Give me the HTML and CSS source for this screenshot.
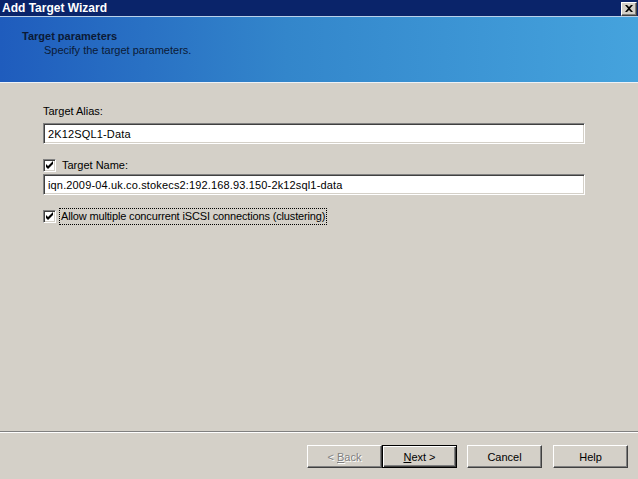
FILE: index.html
```html
<!DOCTYPE html>
<html>
<head>
    <title>Add Target Wizard</title>
    <link rel="stylesheet" href="styles.css">
</head>
<body>
    <div class="wizard">
        <div class="titlebar">
            <span class="title">Add Target Wizard</span>
            <button class="close-btn">
                <svg width="8" height="7" viewBox="0 0 8 7"><path d="M0 0h2l2 2 2-2h2L5 3.5 8 7H6L4 5 2 7H0l3-3.5z" fill="#000"/></svg>
            </button>
        </div>

        <div class="header">
            <p class="header-title">Target parameters</p>
            <p class="header-sub">Specify the target parameters.</p>
        </div>

        <div class="content">
            <label class="field-label">Target Alias:</label>
            <div class="textbox">2K12SQL1-Data</div>

            <div class="check-row">
                <span class="checkbox checked"></span>
                <span class="check-label">Target Name:</span>
            </div>
            <div class="textbox">iqn.2009-04.uk.co.stokecs2:192.168.93.150-2k12sql1-data</div>

            <div class="check-row last">
                <span class="checkbox checked"></span>
                <span class="check-label focused">Allow multiple concurrent iSCSI connections (clustering)</span>
            </div>
        </div>

        <div class="footer">
            <button class="btn" disabled>&lt; <u>B</u>ack</button>
            <button class="btn default"><u>N</u>ext &gt;</button>
            <button class="btn spaced">Cancel</button>
            <button class="btn spaced-lg">Help</button>
        </div>
    </div>
</body>
</html>
```

FILE: styles.css
```css
body, html {
    margin: 0;
    padding: 0;
    width: 638px;
    height: 479px;
    overflow: hidden;
    background: #d4d0c8;
    font-family: "Liberation Sans", Arial, sans-serif;
    font-size: 11px;
    color: #000;
}

.wizard {
    height: 479px;
    display: flex;
    flex-direction: column;
}

/* title bar */
.titlebar {
    height: 16px;
    background: #0a246a;
    display: flex;
    align-items: center;
    justify-content: space-between;
    padding: 0 1px 0 2px;
}

.title {
    color: #fff;
    font-weight: bold;
    font-size: 12px;
    font-family: "Liberation Sans", Arial, sans-serif;
}

.close-btn {
    width: 16px;
    height: 14px;
    padding: 0;
    margin-top: 1px;
    background: #d4d0c8;
    border: 1px solid;
    border-color: #fff #404040 #404040 #fff;
    box-shadow: inset -1px -1px #808080;
    display: flex;
    align-items: center;
    justify-content: center;
}

/* blue header */
.header {
    height: 67px;
    box-sizing: border-box;
    border-top: 1px solid #b9d1ea;
    border-bottom: 1px solid #eef2f7;
    background: linear-gradient(to right, #1f5cbd, #3386cb 45%, #45a3dd);
    padding: 12px 0 0 22px;
}

.header-title {
    margin: 0;
    font-weight: bold;
    color: #0b1a36;
    line-height: 14px;
}

.header-sub {
    margin: 0;
    padding-left: 22px;
    color: #0b1a36;
    line-height: 14px;
}

/* form */
.content {
    flex: 1;
    padding: 22px 53px 0 43px;
    display: flex;
    flex-direction: column;
    border-bottom: 1px solid #808080;
}

.field-label {
    line-height: 13px;
    margin-bottom: 5px;
}

.textbox {
    height: 21px;
    box-sizing: border-box;
    background: #fff;
    border: 1px solid;
    border-color: #808080 #fff #fff #808080;
    box-shadow: inset 1px 1px #404040, inset -1px -1px #d4d0c8;
    padding: 3px 0 0 4px;
    line-height: 14px;
    letter-spacing: 0.15px;
    white-space: nowrap;
}

.check-row {
    display: flex;
    align-items: center;
    margin: 13px 0 1px;
    height: 16px;
}

.check-row.last {
    margin-top: 13px;
}

.checkbox {
    width: 13px;
    height: 13px;
    box-sizing: border-box;
    background: #fff;
    border: 1px solid;
    border-color: #808080 #fff #fff #808080;
    box-shadow: inset 1px 1px #404040, inset -1px -1px #d4d0c8;
    margin-right: 5px;
}

.checkbox.checked {
    background: #fff url("data:image/svg+xml;utf8,<svg xmlns='http://www.w3.org/2000/svg' width='11' height='11'><path d='M2 4v3l2 2 5-5V1L4 6z' fill='black'/></svg>") no-repeat 0 0;
}

.check-label {
    padding: 1px 1px;
    line-height: 13px;
}

.check-label.focused {
    margin-left: -2px;
    border: 1px dotted #000;
    letter-spacing: -0.15px;
}

/* buttons */
.footer {
    height: 47px;
    box-sizing: border-box;
    border-top: 1px solid #fff;
    display: flex;
    justify-content: flex-end;
    padding: 12px 10px 0 0;
}

.btn {
    width: 75px;
    height: 23px;
    box-sizing: border-box;
    background: #d4d0c8;
    border: 1px solid;
    border-color: #fff #404040 #404040 #fff;
    box-shadow: inset -1px -1px #808080;
    font-family: inherit;
    font-size: 11px;
    color: #000;
    padding: 0;
}

.btn:disabled {
    color: #808080;
    text-shadow: 1px 1px #fff;
}

.btn.default {
    border: 1px solid #000;
    box-shadow: inset 1px 1px #fff, inset -1px -1px #404040, inset -2px -2px #808080;
}

.btn.spaced {
    margin-left: 10px;
}

.btn.spaced-lg {
    margin-left: 11px;
}
```
